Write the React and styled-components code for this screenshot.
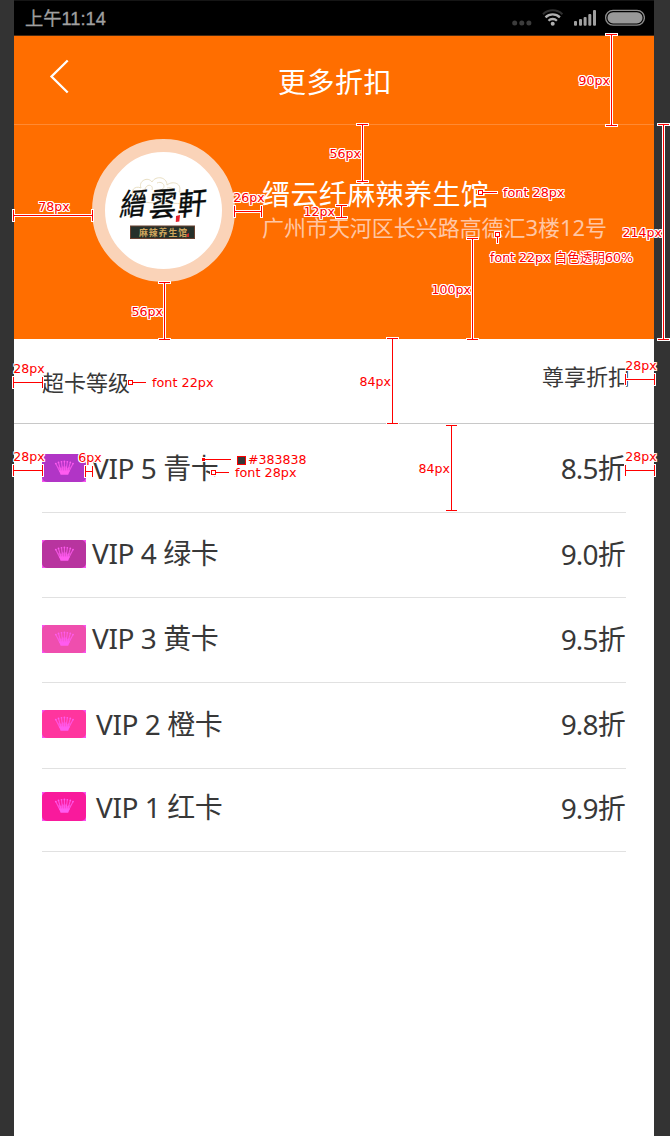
import React from "react";
import styled, { createGlobalStyle, css } from "styled-components";

const Global = createGlobalStyle`
  * { box-sizing: border-box; }
  body { margin: 0; background: #333; }
`;

const Board = styled.div`
  position: relative;
  width: 670px;
  height: 1136px;
  padding: 0 16px 0 14px;
  overflow: hidden;
  background: #333;
  font-family: "Noto Sans", "Noto Sans CJK SC", sans-serif;
  color: #383838;
`;

const Phone = styled.main`
  height: 100%;
  display: flex;
  flex-direction: column;
  background: #fff;
`;

const StatusBar = styled.div`
  height: 36px;
  flex: none;
  display: flex;
  justify-content: space-between;
  padding: 0 9px 0 11px;
  background: #000;
  border-top: 1px solid #151515;
  border-bottom: 1px solid #4a2a10;
  color: #a0a0a0;
`;

const Clock = styled.span`
  font: 400 18.3px/35px "Liberation Sans", "Noto Sans CJK SC", sans-serif;
  -webkit-text-stroke: 0.3px #a0a0a0;
  white-space: nowrap;
`;

const TitleBar = styled.header`
  height: 89px;
  flex: none;
  display: grid;
  grid-template-columns: 90px 1fr 90px;
  align-items: center;
  background: #ff6e00;
  border-bottom: 1px solid #ff8a33;
`;

const BackIcon = styled.svg`
  display: block;
  margin: 0 0 8px 35px;
`;

const Title = styled.h1`
  margin: 0;
  padding: 3px 0 0 2px;
  text-align: center;
  color: #fff;
  font-size: 28px;
  font-weight: 400;
  line-height: 40px;
  letter-spacing: 0.5px;
`;

const Shop = styled.section`
  height: 214px;
  flex: none;
  display: flex;
  align-items: flex-start;
  gap: 27px;
  padding: 14px 0 0 78px;
  background: #ff6e00;
`;

const Avatar = styled.div`
  width: 143px;
  height: 143px;
  flex: none;
  border: 13px solid #fad3b8;
  border-radius: 50%;
  background: #fff;
`;

const ShopText = styled.div`
  display: flex;
  flex-direction: column;
  padding-top: 35px;
  white-space: nowrap;
`;

const ShopName = styled.div`
  color: #fff;
  font-size: 28px;
  line-height: 40px;
  letter-spacing: 0.4px;
`;

const ShopAddress = styled.div`
  color: #ffc6a4;
  font-size: 22px;
  line-height: 26px;
  letter-spacing: -0.04px;
`;

const TableHead = styled.div`
  height: 85px;
  flex: none;
  display: flex;
  justify-content: space-between;
  padding: 0 24px 0 28px;
  border-bottom: 1px solid #c8c8c8;
  font-size: 22px;
  line-height: 30px;
`;

const HeadCell = styled.span`
  padding-top: ${(p) => p.$top}px;
`;

const Row = styled.div`
  height: ${(p) => p.$height}px;
  flex: none;
  display: flex;
  align-items: flex-start;
  margin: 0 28px;
  padding-top: ${(p) => p.$top}px;
  border-bottom: 1px solid #e1e1e1;
  font-size: 28px;
  line-height: 26px;
`;

const Badge = styled.span`
  width: 44px;
  height: ${(p) => p.$height}px;
  flex: none;
  background: #f850f0;
`;

const BadgeFace = styled.span`
  display: block;
  height: 100%;
  border-radius: 5px;
  background: ${(p) => p.$color};
`;

const Level = styled.span`
  flex: 1;
  padding-left: ${(p) => p.$gap}px;
  padding-top: ${(p) => p.$drop}px;
  letter-spacing: -0.42px;
  white-space: nowrap;
`;

const Rate = styled.span`
  padding-top: ${(p) => p.$drop}px;
  padding-right: 1px;
  letter-spacing: -0.8px;
  white-space: nowrap;
`;

/* Specification marks that lie over the screen */
const Dimension = styled.div`
  position: absolute;
  display: flex;
  align-items: center;
  ${(p) =>
    p.$vertical
      ? css`
          right: ${664 - p.$at}px;
          top: ${p.$from}px;
          height: ${p.$length}px;
        `
      : css`
          flex-direction: column;
          left: ${p.$from}px;
          bottom: ${1130 - p.$at}px;
          width: ${p.$length}px;
        `}
`;

const Beam = styled.div`
  display: flex;
  flex: none;
  align-items: center;
  justify-content: space-between;
  filter: drop-shadow(1px 0 0 #fff) drop-shadow(-1px 0 0 #fff)
    drop-shadow(0 1px 0 #fff) drop-shadow(0 -1px 0 #fff);
  ${(p) =>
    p.$vertical
      ? css`flex-direction: column; width: 11px; height: 100%;`
      : css`height: 11px; width: 100%;`}
`;

const Cap = styled.i`
  background: #f00;
  ${(p) => (p.$vertical ? css`width: 11px; height: 1px;` : css`width: 1px; height: 11px;`)}
`;

const Stem = styled.i`
  flex: 1;
  background: #f00;
  ${(p) => (p.$vertical ? css`width: 1px;` : css`height: 1px;`)}
`;

const Note = styled.span`
  flex: none;
  color: #f00;
  font: ${(p) => p.$size || 12.6}px/16px "DejaVu Sans", "Noto Sans CJK SC", sans-serif;
  white-space: nowrap;
  text-shadow: 1px 0 #fff, -1px 0 #fff, 0 1px #fff, 0 -1px #fff,
    1px 1px #fff, -1px -1px #fff, 1px -1px #fff, -1px 1px #fff;
`;

const SideNote = styled(Note)`
  z-index: 1;
  margin-right: ${(p) => (p.$clear ? 1 : -4)}px;
  padding-top: 1px;
`;

const TopNote = styled(Note)`
  z-index: 1;
  padding-left: 2px;
  margin-bottom: ${(p) => (p.$tight ? -5 : 0)}px;
`;

const Pointer = styled.div`
  position: absolute;
  left: ${(p) => p.$x}px;
  top: ${(p) => p.$y}px;
  display: flex;
  align-items: ${(p) => (p.$down ? "flex-start" : "center")};
  flex-direction: ${(p) => (p.$down ? "column" : "row")};
`;

const Leader = styled.div`
  display: flex;
  align-items: center;
  flex-direction: ${(p) => (p.$down ? "column" : "row")};
  margin: ${(p) => (p.$down ? "0 0 7px 5px" : "0 6px 1px 0")};
  filter: drop-shadow(1px 0 0 #fff) drop-shadow(-1px 0 0 #fff)
    drop-shadow(0 1px 0 #fff) drop-shadow(0 -1px 0 #fff);
`;

const Target = styled.i`
  width: ${(p) => p.$size || 5}px;
  height: ${(p) => p.$size || 5}px;
  border: 1px solid #f00;
  background: ${(p) => p.$fill || "#fff"};
`;

const Line = styled.i`
  background: #f00;
  ${(p) =>
    p.$down
      ? css`width: 1px; height: ${p.$length}px;`
      : css`height: 1px; width: ${p.$length}px;`}
`;

const Swatch = styled(Target)`
  margin-right: 2px;
`;

const columns = [
  { at: 611, from: 34, to: 125, text: "90px" },
  { at: 663, from: 124, to: 339, text: "214px" },
  { at: 362, from: 124, to: 181, text: "56px" },
  { at: 341, from: 205, to: 217, text: "12px", clear: true },
  { at: 472, from: 238, to: 339, text: "100px" },
  { at: 164, from: 282, to: 339, text: "56px" },
  { at: 392, from: 338, to: 423, text: "84px" },
  { at: 451, from: 425, to: 510, text: "84px" },
];

const spans = [
  { at: 215, from: 13, to: 92, text: "78px", tight: true },
  { at: 211, from: 234, to: 261, text: "26px" },
  { at: 382, from: 13, to: 42, text: "28px" },
  { at: 470, from: 13, to: 42, text: "28px" },
  { at: 471, from: 85, to: 92, text: "6px" },
  { at: 379, from: 625, to: 654, text: "28px" },
  { at: 470, from: 625, to: 654, text: "28px" },
];

function Height({ at, from, to, text, clear }) {
  return (
    <Dimension $vertical $at={at} $from={from} $length={to - from + 1}>
      <SideNote $clear={clear}>{text}</SideNote>
      <Beam $vertical>
        <Cap $vertical />
        <Stem $vertical />
        <Cap $vertical />
      </Beam>
    </Dimension>
  );
}

function Width({ at, from, to, text, tight }) {
  return (
    <Dimension $at={at} $from={from} $length={to - from + 1}>
      <TopNote $tight={tight}>{text}</TopNote>
      <Beam>
        <Cap />
        <Stem />
        <Cap />
      </Beam>
    </Dimension>
  );
}

function Crown() {
  return (
    <svg width="44" height="28" viewBox="0 0 44 28" fill="#ff5cf0" stroke="#ff5cf0">
      <path d="M17 16.500H27.800L26.200 20.800H18.600Z" stroke="none" />
      <path
        d="M18 18L14 10M19 17L16.600 9M20.500 17L19.600 8.500M22.400 17V8M24.200 17L25.200 8.500M25.800 17L28.200 9M26.700 18L30.800 10"
        fill="none"
        strokeWidth="1.100"
        opacity=".8"
      />
      <path d="M18.200 17.500L16 12.500L19.400 14L20.800 11.500L22.400 14L24 11.500L25.400 14L28.800 12.500L26.600 17.500Z" stroke="none" opacity=".6" />
      <g stroke="none">
        <circle cx="13.800" cy="9.600" r=".9" />
        <circle cx="16.500" cy="8.400" r=".9" />
        <circle cx="19.500" cy="7.800" r=".9" />
        <circle cx="22.400" cy="7.500" r=".9" />
        <circle cx="25.300" cy="7.800" r=".9" />
        <circle cx="28.300" cy="8.400" r=".9" />
        <circle cx="31" cy="9.600" r=".9" />
      </g>
    </svg>
  );
}

function Logo() {
  const brush = {
    fontFamily: '"Noto Sans CJK TC", sans-serif',
    fontWeight: 400,
    fill: "#080c0c",
    stroke: "#080c0c",
    strokeWidth: 0.4,
  };
  return (
    <svg width="117" height="117" viewBox="0 0 117 117">
      <g fill="none" stroke="#e9dfc3" strokeWidth="1">
        <path d="M29 45C24 39 30 33 36 36C33 29 43 24 47 30C51 23 62 25 62 33C68 28 78 32 74 40C82 40 84 48 78 50" />
        <path d="M40 37C42 31 49 33 47 38M52 31C59 28 62 37 55 38M62 36C70 34 73 43 65 44M32 43C38 38 44 46 37 50M51 42C57 38 63 46 57 50M29 47C40 53 60 50 80 52" />
      </g>
      <g {...brush}>
        <text fontSize="30" transform="translate(14 64) rotate(-5) skewX(-14) scale(.86 1)">縉</text>
        <text fontSize="30" transform="translate(43 65) rotate(-4) skewX(-10) scale(.92 1.08)">雲</text>
        <text fontSize="30" transform="translate(72 64) rotate(-5) skewX(-10) scale(.96 1.02)">軒</text>
      </g>
      <path d="M71 64L75 63L74.300 69.500L70.800 70Z" fill="#e5202b" />
      <rect x="25.500" y="74" width="64" height="12.500" fill="#26302a" stroke="#69402f" />
      <text
        x="34"
        y="83.600"
        fontSize="8.800"
        fontWeight="700"
        letterSpacing="1"
        fill="#cfa65c"
        fontFamily='"Noto Sans CJK SC", sans-serif'
      >
        麻辣养生馆
      </text>
      <path d="M82 82L84 81V85H82Z" fill="#c82a2a" />
    </svg>
  );
}

function StatusIcons() {
  return (
    <svg width="136" height="34" viewBox="509 1 136 34">
      <g fill="#3c3c3c">
        <circle cx="514.700" cy="23" r="2.500" />
        <circle cx="521.800" cy="23" r="2.500" />
        <circle cx="528.900" cy="23" r="2.500" />
      </g>
      <g fill="none">
        <path d="M543 14.200A14 14 0 0 1 562.400 14.200" stroke="#303030" strokeWidth="2" />
        <path d="M545.500 17.400A10.200 10.200 0 0 1 559.900 17.400" stroke="#b0b0b0" strokeWidth="2.300" />
        <path d="M548.500 20.700A6 6 0 0 1 556.900 20.700" stroke="#b0b0b0" strokeWidth="2.300" />
      </g>
      <circle cx="552.700" cy="23.700" r="2" fill="#b0b0b0" />
      <g fill="#a0a0a0">
        <rect x="574" y="21" width="3" height="4.700" rx="1" />
        <rect x="579" y="19" width="3" height="6.700" rx="1" />
        <rect x="583.600" y="17" width="3" height="8.700" rx="1" />
        <rect x="588.300" y="14" width="3" height="11.700" rx="1" />
        <rect x="593" y="10" width="3" height="15.700" rx="1" />
      </g>
      <rect x="605.600" y="10.400" width="38.800" height="14.800" rx="7.400" fill="none" stroke="#8c8c8c" strokeWidth="1.300" />
      <rect x="607.500" y="12.200" width="35" height="11.300" rx="5.600" fill="#999" />
    </svg>
  );
}

const levels = [
  { name: "VIP 5 青卡", rate: "8.5折", color: "#b135c6", height: 89, top: 30, gap: 6, drop: 1, rateDrop: 1 },
  { name: "VIP 4 绿卡", rate: "9.0折", color: "#b8349f", height: 85, top: 27, gap: 6, drop: 0, rateDrop: 1 },
  { name: "VIP 3 黄卡", rate: "9.5折", color: "#ef4eae", height: 85, top: 27, gap: 6, drop: 0, rateDrop: 1 },
  { name: "VIP 2 橙卡", rate: "9.8折", color: "#ff359e", height: 86, top: 27, gap: 10, drop: 1, rateDrop: 1 },
  { name: "VIP 1 红卡", rate: "9.9折", color: "#f91a9c", height: 83, top: 23, gap: 10, drop: 2, rateDrop: 3, badge: 29 },
];

export default function App() {
  return (
    <Board>
      <Global />
      <Phone>
        <StatusBar>
          <Clock>上午11:14</Clock>
          <StatusIcons />
        </StatusBar>
        <TitleBar>
          <BackIcon width="24" height="38" viewBox="0 0 24 38" fill="none" stroke="#fff" strokeWidth="2.300">
            <path d="M18.700 3.500L2.500 19.500L18.700 35.500" />
          </BackIcon>
          <Title>更多折扣</Title>
        </TitleBar>
        <Shop>
          <Avatar>
            <Logo />
          </Avatar>
          <ShopText>
            <ShopName>缙云纤麻辣养生馆</ShopName>
            <ShopAddress>广州市天河区长兴路高德汇3楼12号</ShopAddress>
          </ShopText>
        </Shop>
        <TableHead>
          <HeadCell $top={28}>超卡等级</HeadCell>
          <HeadCell $top={22}>尊享折扣</HeadCell>
        </TableHead>
        {levels.map((l) => (
          <Row key={l.name} $height={l.height} $top={l.top}>
            <Badge $height={l.badge || 28}>
              <BadgeFace $color={l.color}>
                <Crown />
              </BadgeFace>
            </Badge>
            <Level $gap={l.gap} $drop={l.drop}>{l.name}</Level>
            <Rate $drop={l.rateDrop}>{l.rate}</Rate>
          </Row>
        ))}
      </Phone>

      {columns.map((m) => (
        <Height key={`${m.at}-${m.from}`} {...m} />
      ))}
      {spans.map((m) => (
        <Width key={`${m.at}-${m.from}`} {...m} />
      ))}

      <Pointer $x={478} $y={185}>
        <Leader>
          <Target />
          <Line $length={14} />
        </Leader>
        <Note $size={12.8}>font 28px</Note>
      </Pointer>

      <Pointer $down $x={490} $y={232}>
        <Leader $down>
          <Target />
          <Line $down $length={6} />
        </Leader>
        <Note>font 22px 白色透明60%</Note>
      </Pointer>

      <Pointer $x={128} $y={375}>
        <Leader>
          <Target />
          <Line $length={13} />
        </Leader>
        <Note $size={12.8}>font 22px</Note>
      </Pointer>

      <Pointer $x={202} $y={452}>
        <Leader>
          <Target $size={3} $fill="#f00" />
          <Line $length={26} />
        </Leader>
        <Swatch $size={9} $fill="#383838" />
        <Note>#383838</Note>
      </Pointer>

      <Pointer $x={211} $y={465}>
        <Leader>
          <Target />
          <Line $length={13} />
        </Leader>
        <Note $size={12.8}>font 28px</Note>
      </Pointer>
    </Board>
  );
}
